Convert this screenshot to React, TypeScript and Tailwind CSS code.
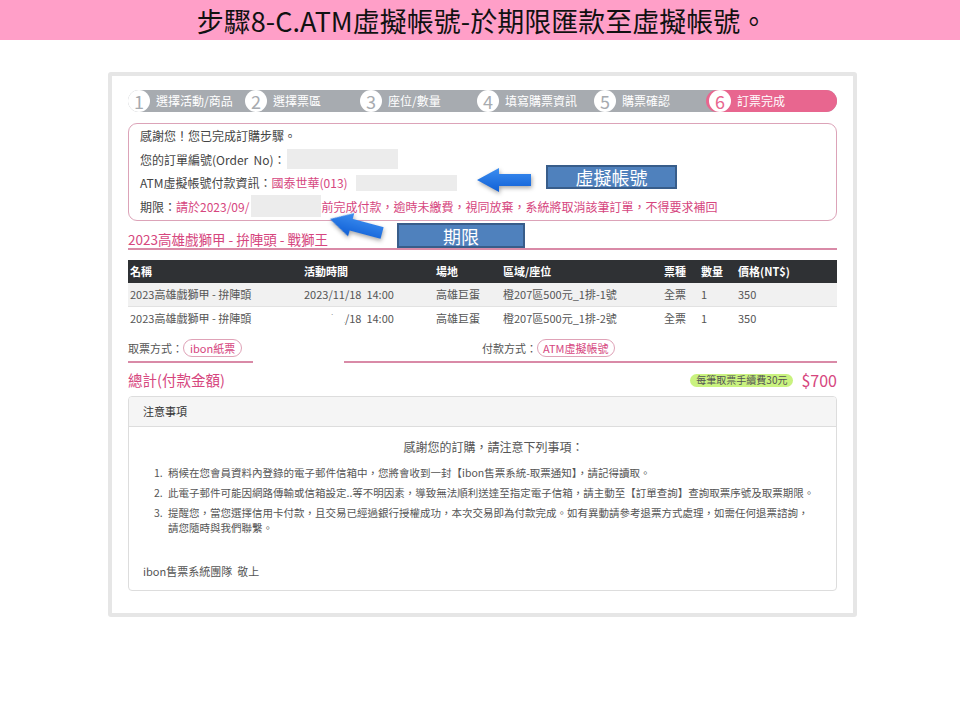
import React from "react";

const FONT = { fontFamily: '"Noto Sans CJK TC", "Noto Sans", sans-serif' };

function Arrow({ className }: { className: string }) {
  return (
    <svg className={className} width="58" height="26" viewBox="0 0 58 26">
      <defs>
        <linearGradient id="ag" x1="0" y1="0" x2="0" y2="1">
          <stop offset="0" stopColor="#3d8ef0" />
          <stop offset="1" stopColor="#0f5fd6" />
        </linearGradient>
      </defs>
      <path d="M2 13 L24 1 L24 7 L56 7 L56 19 L24 19 L24 25 Z" fill="url(#ag)" />
    </svg>
  );
}

const steps = [
  { n: "1", label: "選擇活動/商品", w: "w-[117px]" },
  { n: "2", label: "選擇票區", w: "w-[115px]" },
  { n: "3", label: "座位/數量", w: "w-[117px]" },
  { n: "4", label: "填寫購票資訊", w: "w-[117px]" },
  { n: "5", label: "購票確認", w: "w-[115px]" },
];

export default function App() {
  return (
    <div className="relative w-[960px] h-[720px] bg-white overflow-hidden" style={FONT}>
      <div className="h-[40px] bg-[#ff9fc8] flex items-center justify-center text-[27px] text-[#111] leading-none pl-[4px]">
        步驟8-C.ATM虛擬帳號-於期限匯款至虛擬帳號。
      </div>

      <div className="ml-[108px] mt-[32px] w-[749px] border-4 border-[#e6e6e6] rounded-[3px] bg-white px-[16px] pt-[14px] pb-[22px]">
        {/* step bar */}
        <div className="flex h-[22px] rounded-full bg-[#a7abb0] items-center text-white text-[12px]">
          {steps.map((s) => (
            <div key={s.n} className={`flex items-center gap-[6px] ${s.w}`}>
              <div className="w-[22px] h-[22px] rounded-full bg-white flex items-center justify-center text-[#a7abb0] text-[18px] leading-none">
                {s.n}
              </div>
              <span>{s.label}</span>
            </div>
          ))}
          <div className="flex-1 h-full -ml-[3px] pl-[3px] rounded-full bg-[#e8668f] flex items-center gap-[6px]">
            <div className="w-[22px] h-[22px] rounded-full bg-white flex items-center justify-center text-[#e8668f] text-[18px] leading-none">
              6
            </div>
            <span>訂票完成</span>
          </div>
        </div>

        {/* info box */}
        <div className="mt-[11px] border border-[#dca3b8] rounded-[9px] pl-[11px] pb-[2px] text-[12px] leading-[23.5px] text-[#444]">
          <div>感謝您！您已完成訂購步驟。</div>
          <div className="flex items-center">
            <span>您的訂單編號(Order&nbsp;&nbsp;No)：</span>
            <span className="inline-block w-[111px] h-[20px] bg-[#ececec] ml-[1px]" />
          </div>
          <div className="flex items-center">
            <span>ATM虛擬帳號付款資訊：</span>
            <span className="text-[#d6467e]">國泰世華(013)</span>
            <span className="inline-block w-[101px] h-[16px] bg-[#ececec] ml-[8px]" />
          </div>
          <div className="flex items-center">
            <span>期限：</span>
            <span className="text-[#d6467e]">請於2023/09/</span>
            <span className="inline-block w-[70px] h-[22px] bg-[#ececec] ml-[2px]" />
            <span className="text-[#d6467e]">前完成付款，逾時未繳費，視同放棄，系統將取消該筆訂單，不得要求補回</span>
          </div>
        </div>

        {/* event title */}
        <div className="mt-[9px] text-[13.5px] leading-[18px] text-[#d6467e] border-b-2 border-[#d98aa7]">
          2023高雄戲獅甲 - 拚陣頭 - 戰獅王
        </div>

        {/* table */}
        <div className="mt-[10px] text-[11px]">
          <div className="grid grid-cols-[174px_132px_67px_161px_37px_37px_1fr] h-[23px] items-center bg-[#2f3134] text-white font-bold pl-[2px]">
            <div>名稱</div>
            <div>活動時間</div>
            <div>場地</div>
            <div>區域/座位</div>
            <div>票種</div>
            <div>數量</div>
            <div>價格(NT$)</div>
          </div>
          <div className="grid grid-cols-[174px_132px_67px_161px_37px_37px_1fr] h-[24px] items-center bg-[#f1f1f1] border-b border-[#e2e2e2] text-[#555] pl-[2px]">
            <div>2023高雄戲獅甲 - 拚陣頭</div>
            <div>2023/11/18&nbsp;&nbsp;14:00</div>
            <div>高雄巨蛋</div>
            <div>橙207區500元_1排-1號</div>
            <div>全票</div>
            <div>1</div>
            <div>350</div>
          </div>
          <div className="grid grid-cols-[174px_132px_67px_161px_37px_37px_1fr] h-[23px] items-center bg-white text-[#555] pl-[2px]">
            <div>2023高雄戲獅甲 - 拚陣頭</div>
            <div className="relative">
              2023/11/18&nbsp;&nbsp;14:00
              <span className="absolute left-[-1px] top-[5px] w-[41px] h-[12px] bg-white" />
            </div>
            <div>高雄巨蛋</div>
            <div>橙207區500元_1排-2號</div>
            <div>全票</div>
            <div>1</div>
            <div>350</div>
          </div>
        </div>

        {/* ticket / payment method */}
        <div className="mt-[6px] grid grid-cols-[354px_1fr] h-[24px] items-center text-[11px] text-[#555]">
          <div className="flex items-center">
            <span>取票方式：</span>
            <span className="h-[18px] px-[6px] rounded-full border border-[#dfa2b7] text-[#d6467e] flex items-center">ibon紙票</span>
          </div>
          <div className="flex items-center">
            <span>付款方式：</span>
            <span className="h-[18px] px-[5px] rounded-full border border-[#dfa2b7] text-[#d6467e] flex items-center">ATM虛擬帳號</span>
          </div>
        </div>
        <div className="flex mt-[1px]">
          <div className="w-[125px] h-[2px] bg-[#d98aa7]" />
          <div className="ml-[91px] flex-1 h-[2px] bg-[#d98aa7]" />
        </div>

        {/* total */}
        <div className="mt-[5px] h-[24px] flex items-center justify-between">
          <span className="text-[14.5px] text-[#d6467e]">總計(付款金額)</span>
          <div className="flex items-center gap-[8px]">
            <span className="h-[13px] px-[6px] rounded-full bg-[#c9f27f] text-[10px] text-[#555] flex items-center leading-none">每筆取票手續費30元</span>
            <span className="text-[16px] text-[#d6467e] leading-none">$700</span>
          </div>
        </div>

        {/* notice panel */}
        <div className="mt-[4px] border border-[#dddddd] rounded-[4px] overflow-hidden">
          <div className="h-[30px] bg-[#f5f5f5] border-b border-[#dddddd] flex items-center pl-[14px] text-[11px] text-[#333]">
            注意事項
          </div>
          <div className="pt-[11px] pb-[10px] text-[#555]">
            <div className="text-center text-[12px] leading-[18px] pl-[22px]">感謝您的訂購，請注意下列事項：</div>
            <ol className="mt-[9px] pl-[25px] text-[10.5px] leading-[15px] flex flex-col gap-[5px] whitespace-nowrap">
              <li className="flex"><span className="w-[14px]">1.</span><span>稍候在您會員資料內登錄的電子郵件信箱中，您將會收到一封【ibon售票系統-取票通知】，請記得讀取。</span></li>
              <li className="flex"><span className="w-[14px]">2.</span><span>此電子郵件可能因網路傳輸或信箱設定..等不明因素，導致無法順利送達至指定電子信箱，請主動至【訂單查詢】查詢取票序號及取票期限。</span></li>
              <li className="flex"><span className="w-[14px]">3.</span><span>提醒您，當您選擇信用卡付款，且交易已經過銀行授權成功，本次交易即為付款完成。如有異動請參考退票方式處理，如需任何退票諮詢，<br />請您隨時與我們聯繫。</span></li>
            </ol>
            <div className="mt-[27px] pl-[14px] text-[11px] leading-[18px]">ibon售票系統團隊&nbsp;&nbsp;敬上</div>
          </div>
        </div>
      </div>

      {/* annotations */}
      <Arrow className="absolute left-[475px] top-[167px] drop-shadow-[1px_2px_2px_rgba(0,0,0,0.35)]" />
      <div className="absolute left-[546px] top-[165px] w-[131px] h-[24px] bg-[#4f81bd] border-2 border-[#385d8a] flex items-center justify-center text-white text-[18px] leading-none">
        虛擬帳號
      </div>
      <Arrow className="absolute left-[327px] top-[213px] rotate-[15deg] drop-shadow-[1px_2px_2px_rgba(0,0,0,0.35)]" />
      <div className="absolute left-[397px] top-[223px] w-[128px] h-[25px] bg-[#4f81bd] border-2 border-[#385d8a] flex items-center justify-center text-white text-[18px] leading-none">
        期限
      </div>
    </div>
  );
}
